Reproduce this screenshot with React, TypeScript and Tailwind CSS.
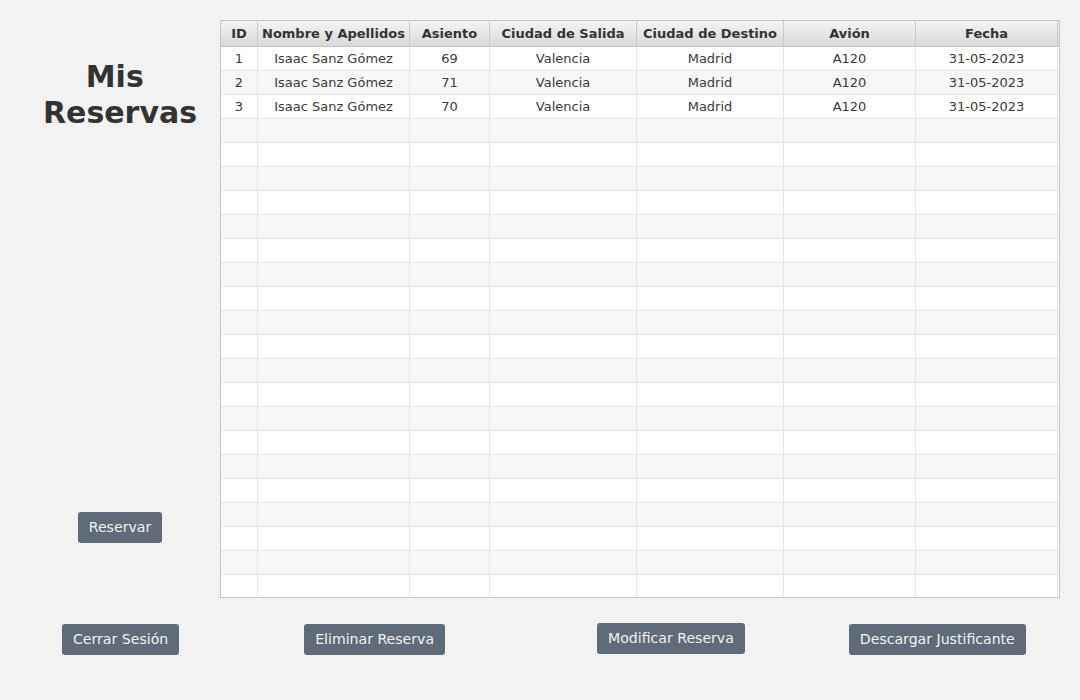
import React from 'react';

const columns = ['ID', 'Nombre y Apellidos', 'Asiento', 'Ciudad de Salida', 'Ciudad de Destino', 'Avión', 'Fecha'];

const reservas = [
  ['1', 'Isaac Sanz Gómez', '69', 'Valencia', 'Madrid', 'A120', '31-05-2023'],
  ['2', 'Isaac Sanz Gómez', '71', 'Valencia', 'Madrid', 'A120', '31-05-2023'],
  ['3', 'Isaac Sanz Gómez', '70', 'Valencia', 'Madrid', 'A120', '31-05-2023'],
];

const TOTAL_ROWS = 23;

const gridCols = 'grid grid-cols-[37px_152px_80px_147px_147px_132px_142px]';

const btn =
  'h-[31px] px-[11px] rounded-[3px] bg-[#5f6b78] text-[#f2f2f2] text-[14.1px] leading-none whitespace-nowrap';

const App: React.FC = () => {
  const rows = Array.from({ length: TOTAL_ROWS }, (_, i) => reservas[i] ?? ['', '', '', '', '', '', '']);

  return (
    <div
      className="w-[1080px] h-[700px] bg-[#f2f2f2] text-[#333333] overflow-hidden"
      style={{ fontFamily: '"DejaVu Sans", "Liberation Sans", sans-serif' }}
    >
      <div className="flex pt-[20px]">
        {/* Left column */}
        <div className="ml-[20px] w-[200px] flex flex-col items-center">
          <h1 className="mt-[39px] text-[30px] leading-[36px] font-bold text-center text-[#333333]">
            Mis{'\u00a0'}
            <br />
            Reservas
          </h1>
          <button className={`${btn} mt-auto mb-[55px]`}>Reservar</button>
        </div>

        {/* Table */}
        <div className="w-[840px] h-[578px] border border-[#c6c6c6] bg-white overflow-hidden">
          <div className={`${gridCols} h-[26px] bg-gradient-to-b from-[#f4f4f4] to-[#d9d9d9] border-b border-[#c4c4c4]`}>
            {columns.map((c) => (
              <div
                key={c}
                className="flex items-center justify-center pt-[1px] border-r border-[#c9c9c9] text-[13px] font-bold whitespace-nowrap overflow-hidden"
              >
                {c}
              </div>
            ))}
          </div>
          {rows.map((r, i) => (
            <div
              key={i}
              className={`${gridCols} h-[24px] ${i % 2 === 1 ? 'bg-[#f7f7f7]' : 'bg-white'}`}
            >
              {r.map((v, j) => (
                <div
                  key={j}
                  className="flex items-center justify-center border-r border-b border-[#e6e6e6] text-[13px] text-[#3a3a3a] whitespace-nowrap"
                >
                  {v}
                </div>
              ))}
            </div>
          ))}
        </div>
      </div>

      {/* Bottom buttons */}
      <div className="flex items-start mt-[26px]">
        <button className={`${btn} ml-[62px]`}>Cerrar Sesión</button>
        <button className={`${btn} ml-[125px]`}>Eliminar Reserva</button>
        <button className={`${btn} ml-[152px] -mt-[1px]`}>Modificar Reserva</button>
        <button className={`${btn} ml-[104px]`}>Descargar Justificante</button>
      </div>
    </div>
  );
};

export default App;
